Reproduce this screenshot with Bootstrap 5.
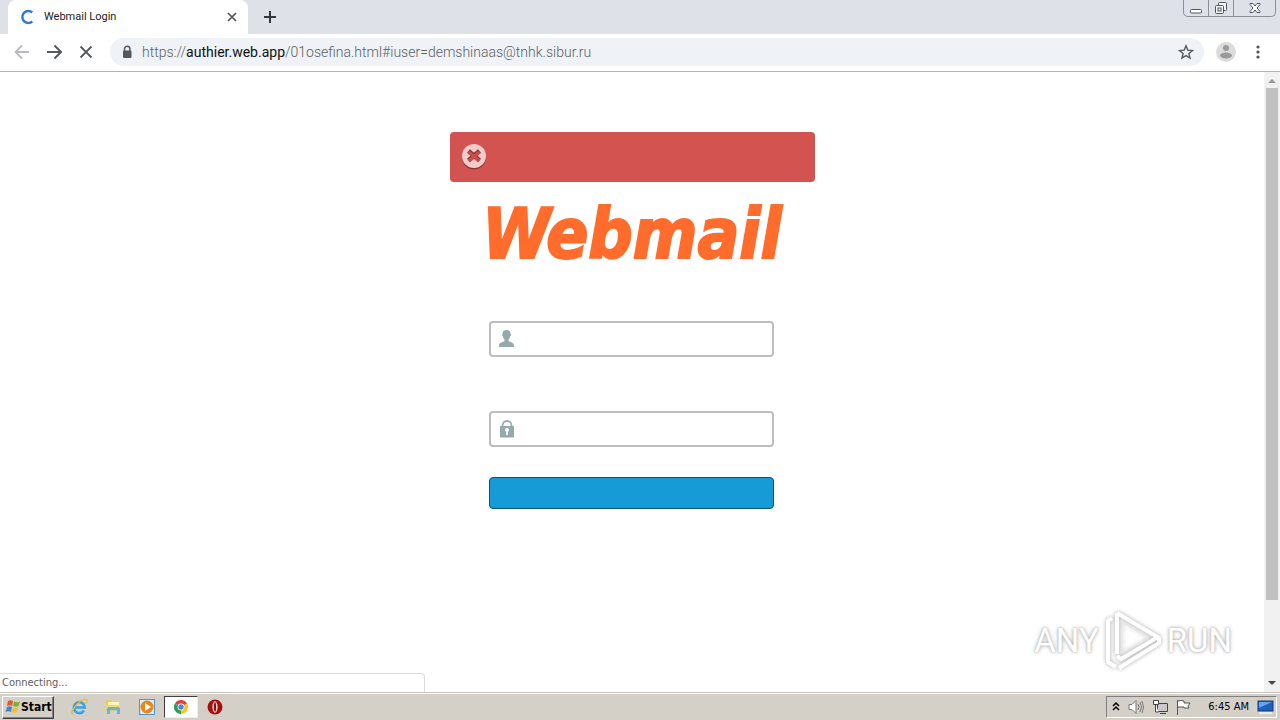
<!DOCTYPE html>
<html lang="en">
<head>
<meta charset="utf-8">
<meta name="viewport" content="width=device-width, initial-scale=1">
<title>Webmail Login</title>
<link href="https://cdn.jsdelivr.net/npm/bootstrap@5.3.0/dist/css/bootstrap.min.css" rel="stylesheet">
<style>
body{font-family:"DejaVu Sans Condensed","DejaVu Sans",sans-serif;font-size:11px;line-height:16px;color:#222;background:#fff}
button{color:inherit}
svg{display:block;flex:none}
.plain{border:0;background:none;padding:0}
.tabstrip{height:34px;background:#dee1e8;padding-left:8px}
.tab{width:240px;height:34px;background:#fff;border-radius:8px 8px 0 0;padding:0 10px 0 12px}
.tab-title{font-family:Roboto,sans-serif}
.newtab{margin-left:15px}
.winbtns{height:17px;border:1px solid #8a8e98;border-top:0;border-radius:0 0 5px 5px}
.winbtns button{width:25px;border-right:1px solid #8a8e98}
.winbtns button:last-child{width:41px;border-right:0}
.toolbar{height:38px;border-bottom:1px solid #b4b4b4;padding:0 14px 2px}
.omnibox{height:28px;background:#eff2f6;border-radius:14px;padding:0 10px}
.url{font-family:Roboto,sans-serif;font-size:14px;font-weight:300;line-height:20px;color:#5b5f64}
.url b{font-weight:400;color:#111}
.scroller{width:16px;background:#f1f1f1;padding:6px 2px}
.thumb{height:512px;background:#c1c1c1}
.login{width:365px;margin-top:60px}
.notice{height:50px;border-radius:4px;background:#d2534f;padding:0 11px}
.brand-text{font-size:69px;font-weight:700;font-style:italic;line-height:68px;color:#ff6c2c;margin-top:18px;-webkit-text-stroke:2px #ff6c2c}
.fields{width:285px;margin-top:53px;margin-right:2px}
.field{height:36px;border:2px solid #bebebe;border-radius:4px;padding:0 7px;margin-bottom:54px}
.field input{border:0;outline:0;background:transparent;min-width:0;font-size:14px}
.field.last{margin-bottom:30px}
.submit{height:32px;border:1px solid #0c5373;border-radius:4px;background:#179bd7}
.status{left:0;bottom:0;width:425px;height:19px;border:1px solid #ddd;border-left:0;border-bottom:0;border-radius:0 4px 0 0;background:#fff;color:#606060;padding:1px 2px}
.watermark{right:48px;bottom:19px;gap:4px;font-family:Roboto,sans-serif;font-size:33px;line-height:60px;color:#fff;text-shadow:0 0 4px #aaa,0 0 2px #bbb}
.taskbar{height:28px;background:#d4d0c8;border-top:1px solid #c8c4bc;box-shadow:inset 0 1px #fff;padding:2px 3px 1px 2px}
.start{width:52px;height:23px;border:1px solid;border-color:#fff #404040 #404040 #fff;background:#d4d0c8;font-size:12px;font-weight:700;color:#000;padding:0 2px;box-shadow:inset -1px -1px #808080}
.app{width:34px;height:22px}
.app.active{background:#fff;border:1px solid;border-color:#404040 #eee #eee #404040}
.tray{height:22px;border:1px solid;border-color:#808080 #fff #fff #808080;padding:0 2px 0 5px;gap:8px;color:#000}
</style>
</head>
<body class="vh-100 d-flex flex-column overflow-hidden">
<header>
  <div class="tabstrip d-flex align-items-center">
    <div class="tab d-flex align-items-center">
      <svg width="16" height="16" viewBox="0 0 16 16" class="me-2"><path d="M12.300 3.500A6 6 0 1 0 12.300 12.500" fill="none" stroke="#2f7ad0" stroke-width="2.400"/></svg>
      <span class="tab-title flex-grow-1">Webmail Login</span>
      <button class="plain" aria-label="Close tab"><svg width="12" height="12" viewBox="0 0 12 12"><path d="M2 2l8 8M10 2l-8 8" stroke="#555" stroke-width="1.700"/></svg></button>
    </div>
    <button class="plain newtab" aria-label="New tab"><svg width="14" height="14" viewBox="0 0 14 14"><path d="M7 1v12M1 7h12" stroke="#33363b" stroke-width="2"/></svg></button>
    <div class="winbtns d-flex ms-auto me-1 align-self-start">
      <button class="plain d-flex justify-content-center align-items-center" aria-label="Minimize"><svg width="14" height="14" viewBox="0 0 14 14"><rect x="1.500" y="8.500" width="11" height="3.500" rx="1" fill="#fff" stroke="#50545c"/></svg></button>
      <button class="plain d-flex justify-content-center align-items-center" aria-label="Restore"><svg width="14" height="14" viewBox="0 0 14 14" fill="#f4f5f7" stroke="#50545c"><rect x="4.500" y="1.500" width="8" height="8" rx="1"/><rect x="1.500" y="4.500" width="8" height="8" rx="1"/><rect x="4" y="7" width="3" height="3"/></svg></button>
      <button class="plain d-flex justify-content-center align-items-center" aria-label="Close"><svg width="14" height="14" viewBox="0 0 14 14"><path d="M2 2.500h3l2 2.500 2-2.500h3v1L9 7l3 3.500v1H9L7 9l-2 2.500H2v-1L5 7 2 3.500z" fill="#fff" stroke="#50545c"/></svg></button>
    </div>
  </div>
  <nav class="toolbar d-flex align-items-center">
    <button class="plain me-3" aria-label="Back"><svg width="16" height="16" viewBox="0 0 16 16"><path d="M15 8H2M8 1.500L1.500 8 8 14.500" fill="none" stroke="#b9bbbe" stroke-width="1.800"/></svg></button>
    <button class="plain me-3" aria-label="Forward"><svg width="16" height="16" viewBox="0 0 16 16"><path d="M1 8h13M8.500 1.500L15 8l-6.500 6.500" fill="none" stroke="#55585c" stroke-width="2"/></svg></button>
    <button class="plain me-3" aria-label="Stop"><svg width="16" height="16" viewBox="0 0 16 16"><path d="M2.500 2.500l11 11M13.500 2.500l-11 11" stroke="#55585c" stroke-width="1.800"/></svg></button>
    <div class="omnibox d-flex align-items-center flex-grow-1">
      <svg width="14" height="16" viewBox="1 0 14 16"><path d="M5.500 7V5a2.700 2.700 0 0 1 5.400 0v2" fill="none" stroke="#55585c" stroke-width="1.500"/><rect x="4" y="6.500" width="8.500" height="7.500" rx="1" fill="#55585c"/></svg>
      <span class="url ms-2 text-nowrap">https://<b>authier.web.app</b>/01osefina.html#iuser=demshinaas@tnhk.sibur.ru</span>
      <button class="plain ms-auto" aria-label="Bookmark"><svg width="16" height="16" viewBox="0 0 16 16"><path d="M8 1.800l1.800 4.300 4.700.4-3.600 3 1.100 4.600-4-2.500-4 2.500 1.100-4.600-3.600-3 4.700-.4z" fill="none" stroke="#55585c" stroke-width="1.400"/></svg></button>
    </div>
    <button class="plain ms-2 me-2 ps-1" aria-label="Profile"><svg width="20" height="20" viewBox="0 0 20 20"><circle cx="10" cy="10" r="10" fill="#dcdcdc"/><circle cx="10" cy="6" r="3" fill="#9a9a9a"/><ellipse cx="10" cy="13.500" rx="6" ry="3" fill="#9a9a9a"/></svg></button>
    <button class="plain ms-1" aria-label="Menu"><svg width="18" height="16" viewBox="0 0 18 16" fill="#505357"><circle cx="10" cy="3" r="1.600"/><circle cx="10" cy="8" r="1.600"/><circle cx="10" cy="13" r="1.600"/></svg></button>
  </nav>
</header>

<div class="d-flex flex-grow-1 position-relative">
  <main class="flex-grow-1 d-flex justify-content-center align-items-start position-relative">
    <form class="login d-flex flex-column align-items-center">
      <div class="notice w-100 d-flex align-items-center" role="alert">
        <svg width="26" height="28" viewBox="0 0 26 28"><circle cx="13" cy="14.500" r="12" fill="#8f3532"/><circle cx="13" cy="13" r="12" fill="#f3cbcb"/><path d="M7.500 8l11 9.500M18.500 8l-11 9.500" stroke="#7f3331" stroke-width="4.500"/><path d="M7.700 9l10.600 9M18.300 9L7.700 18" stroke="#cc4f4c" stroke-width="3.600"/></svg>
      </div>
      <div class="brand-text">Webmail</div>
      <div class="fields">
        <div class="field d-flex align-items-center">
          <label for="user"><svg width="18" height="18" viewBox="0 0 18 18" fill="#95aaac"><path d="M8.500 0C5.700 0 4.500 1.600 4.500 4c-.7.100-.5 1.700.2 2 .3 1.700 1 2.700 1.700 3.300V11C5 12.200 1 12.500 1 15.500V17h15v-1.500c0-3-4-3.300-5.400-4.500V9.300c.8-.6 1.500-1.600 1.700-3.300.8-.3 1-1.900.3-2C12.500 1.600 11.300 0 8.500 0z"/></svg></label>
          <input id="user" class="flex-grow-1 ms-2" type="text" aria-label="Username">
        </div>
        <div class="field last d-flex align-items-center">
          <label for="pass"><svg width="18" height="18" viewBox="0 0 18 18"><path d="M4.500 8V5.500a4.500 4.500 0 0 1 9 0V8" fill="none" stroke="#95aaac" stroke-width="1.800"/><path d="M2 6h14v11.500H2z" fill="#95aaac"/><circle cx="9" cy="10" r="2" fill="#fff"/><path d="M8.200 10h1.800v5H8.200z" fill="#fff"/></svg></label>
          <input id="pass" class="flex-grow-1 ms-2" type="password" aria-label="Password">
        </div>
        <button class="submit w-100 d-block" type="submit" aria-label="Log in"></button>
      </div>
    </form>
    <div class="status position-absolute">Connecting...</div>
  </main>
  <div class="scroller d-flex flex-column">
    <svg width="12" height="10" viewBox="0 0 12 10"><path d="M2 5l4-4 4 4z" fill="#999"/></svg>
    <div class="thumb"></div>
    <svg class="mt-auto" width="12" height="8" viewBox="0 0 12 8"><path d="M2 3h8L6 7z" fill="#444"/></svg>
  </div>
  <div class="watermark position-absolute d-flex align-items-center" aria-hidden="true">
    <span>ANY</span>
    <svg width="60" height="64" viewBox="0 0 60 64" style="filter:drop-shadow(0 0 2px #aaa)" fill="none" stroke-linejoin="round"><path d="M9 9l-4 3v41l8 5M14 4v41M14 4l42 25v5L16 59M14 47l4 3 37-22" stroke="#fff" stroke-width="4"/><path d="M19 13v31l27-15z" stroke="#e8e8e8"/></svg>
    <span>RUN</span>
  </div>
</div>

<footer class="taskbar d-flex align-items-center">
  <button class="start d-flex align-items-center">
    <svg width="16" height="16" viewBox="0 0 16 16"><path d="M3 2c2-1 3-1 5 0L7 7c-2-1-3-1-5 0z" fill="#e8542b"/><path d="M9 2.500c2 1 4 1 6 0L13.500 7c-2 1-3 1-5.500 0z" fill="#79b52c"/><path d="M2 8c2-1 3-1 5 0l-1 5c-2-1-3-1-5.500 0z" fill="#3c86d2"/><path d="M8 8.500c2 1 3 1 5.500 0L12 13c-2 1-3 1-5 0z" fill="#f7bd26"/></svg>
    <span>Start</span>
  </button>
  <div class="d-flex ms-2">
    <button class="plain app d-flex align-items-center justify-content-center" aria-label="Internet Explorer"><svg width="18" height="18" viewBox="0 0 18 18" fill="none"><path d="M14 12.500A5.500 5.500 0 1 1 14.800 9.500H5" stroke="#3ba3e4" stroke-width="2.600"/><path d="M3 16.500C-2 14 12-1 16.500 1.500c1 1 0 3-1 4" stroke="#e9b93c" stroke-width="1.300"/></svg></button>
    <button class="plain app d-flex align-items-center justify-content-center" aria-label="Explorer"><svg width="18" height="18" viewBox="0 0 18 18"><path d="M2 2h5l1 2h7v9H2z" fill="#e8c864"/><path d="M4 4h11v7H4z" fill="#fff5b8"/><path d="M2 7h14v3H2z" fill="#f0d878"/><path d="M3 16v-5q0-2 2-2h9q2 0 2 2v5h-3v-4H6v4z" fill="#62b5df"/></svg></button>
    <button class="plain app d-flex align-items-center justify-content-center" aria-label="Media Player"><svg width="18" height="18" viewBox="0 0 18 18"><rect x="1.500" y="1.500" width="15" height="15" fill="#d9ecfa" stroke="#4f95cf"/><circle cx="9" cy="9" r="6.500" fill="#ee8518"/><path d="M7 5l6 4-6 4z" fill="#fff"/></svg></button>
    <button class="plain app active d-flex align-items-center justify-content-center" aria-label="Chrome"><svg width="14" height="14" viewBox="0 0 14 14"><path d="M7 7L.9 3.500A7 7 0 0 1 13.100 3.500z" fill="#e04438"/><path d="M7 7L.9 3.500A7 7 0 0 0 7 14z" fill="#2f9e50"/><path d="M7 7l6.100-3.500A7 7 0 0 1 7 14z" fill="#fbc51b"/><circle cx="7" cy="7" r="3.400" fill="#fff"/><circle cx="7" cy="7" r="2.700" fill="#4585ee"/></svg></button>
    <button class="plain app d-flex align-items-center justify-content-center" aria-label="Opera"><svg width="16" height="16" viewBox="0 0 16 16"><circle cx="8" cy="8" r="7.500" fill="#a5100f"/><ellipse cx="8" cy="8" rx="2.600" ry="5.800" fill="#f5d8d8"/><ellipse cx="8" cy="8" rx="1.100" ry="4.800" fill="#86100f"/></svg></button>
  </div>
  <div class="tray d-flex align-items-center ms-auto">
    <svg width="8" height="12" viewBox="0 0 8 12"><path d="M1 5l3-3 3 3M1 9l3-3 3 3" fill="none" stroke="#000" stroke-width="1.500"/></svg>
    <svg width="16" height="16" viewBox="0 0 16 16" fill="none" stroke="#777"><path d="M1 5.500h3l4-4v13l-4-4H1z" fill="#fff"/><path d="M10 5q2 3 0 6M12 3q3 5 0 10M14 2q3 6 0 12"/></svg>
    <svg width="16" height="16" viewBox="0 0 16 16" stroke="#444"><path d="M5.500 4.500h10v8h-10zM8 14.500h6" fill="#c9c9c9"/><path d="M1.500 1.500h5v4h-5zM3.500 5v8h3" fill="#fff"/></svg>
    <svg width="16" height="16" viewBox="0 0 16 16"><path d="M1.500 1v15M2 2q3-1 6 0v2h6l-2 3 1 2H8V8H2" fill="#fff" stroke="#555"/></svg>
    <time class="ms-2">6:45 AM</time>
    <svg width="17" height="16" viewBox="0 0 17 16"><rect x="1" y="2" width="15" height="10" fill="#1f5fba" stroke="#123b78"/><path d="M2 3h13L2 9z" fill="#64a5ec"/><path d="M2 13h13v2H2z" fill="#e8edf3"/></svg>
  </div>
</footer>
<script src="https://cdn.jsdelivr.net/npm/bootstrap@5.3.0/dist/js/bootstrap.bundle.min.js"></script>
</body>
</html>
